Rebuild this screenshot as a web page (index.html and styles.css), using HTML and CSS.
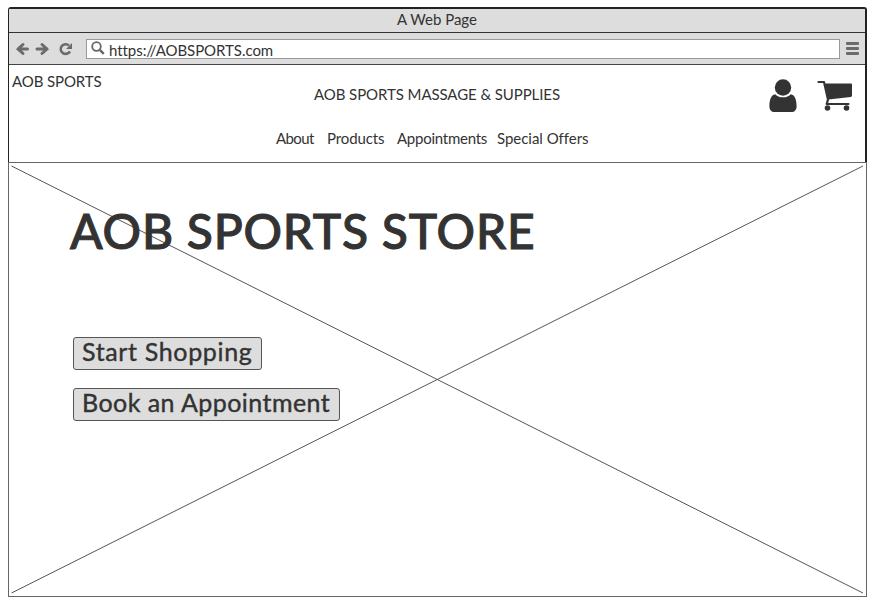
FILE: index.html
```html
<!DOCTYPE html>
<html lang="en">
<head>
<meta charset="utf-8">
<title>A Web Page</title>
<link rel="stylesheet" href="styles.css">
</head>
<body>
<div class="window">
  <div class="chrome">
    <div class="titlebar"><span class="t-title">A Web Page</span></div>
    <div class="toolbar">
      <svg class="nav-icons" width="60" height="16" viewBox="0 0 60 16" fill="none" stroke="#6b6b6b" stroke-width="3" stroke-linecap="round">
        <path d="M12.500 8H3M8 3.500L3 8l5 4.500"/>
        <path d="M22 8h10M27 3.500L32 8l-5 4.500"/>
        <path d="M55 10.500A5 4.800 0 1 1 54 4.500" stroke-width="2.600" stroke-linecap="butt"/>
        <path d="M57 2v6h-6z" fill="#6b6b6b" stroke="none"/>
      </svg>
      <div class="address">
        <svg width="14" height="14" viewBox="0 0 14 14" fill="none" stroke="#666"><circle cx="5.500" cy="5.500" r="4.300" stroke-width="1.800"/><path d="M8.800 8.800l4 4" stroke-width="2.400"/></svg>
        <span class="t-url">https://AOBSPORTS.com</span>
      </div>
      <div class="menu"><i></i><i></i><i></i></div>
    </div>
    <header class="header">
      <div class="brand"><span class="t-brand">AOB SPORTS</span></div>
      <div class="center">
        <div class="tagline"><span class="t-tag">AOB SPORTS MASSAGE &amp; SUPPLIES</span></div>
        <nav class="nav">
          <a class="t-about">About</a><a class="t-products">Products</a><a class="t-appts">Appointments</a><a class="t-offers">Special Offers</a>
        </nav>
      </div>
      <div class="actions">
        <svg width="28" height="34" viewBox="0 0 28 34" fill="#333"><circle cx="14" cy="8.500" r="8.200"/><path d="M6.200 15.200C9 19.300 19 19.300 21.800 15.200C26 16 27.600 21 27.600 27.500C27.600 31 25.500 33 22.500 33H5.500C2.500 33 .4 31 .4 27.500C.4 21 2 16 6.200 15.200z"/></svg>
        <svg width="36" height="34" viewBox="0 0 36 34" fill="#333"><path d="M8 5.500H34a1 1 0 0 1 1 1V17.500a1.500 1.500 0 0 1-1.300 1.500L11.500 21.500z"/><path d="M1.500 4H7l4 17.500-1.300 4.500H31.500" fill="none" stroke="#333" stroke-width="2.200" stroke-linecap="round" stroke-linejoin="round"/><circle cx="10.500" cy="30" r="2.800"/><circle cx="29.500" cy="30" r="2.800"/></svg>
      </div>
    </header>
  </div>
  <main class="hero">
    <svg class="cross" width="857" height="433" viewBox="0 0 857 433" stroke="#555" stroke-width="1"><path d="M2.500 3L854 430M2.500 430L854 3"/></svg>
    <div class="content">
      <h1><span class="t-h1">AOB SPORTS STORE</span></h1>
      <button class="shop"><span class="t-shop">Start Shopping</span></button>
      <button class="book"><span class="t-book">Book an Appointment</span></button>
    </div>
  </main>
</div>
</body>
</html>
```
FILE: styles.css
```css
* { box-sizing: border-box; }
body { margin: 0; background: #fff; color: #333; font: 15px/20px Lato, "Open Sans", sans-serif; }
span, a { white-space: nowrap; }
.window { width: 859px; margin: 7px 0 0 8px; }
.chrome { height: 155px; border: 2px solid #222; border-width: 2px 2px 0 1.500px; border-radius: 3px 3px 0 0; }
.titlebar { height: 24px; text-align: center; background: #ddd; border-bottom: 1px solid #333; }
.toolbar { height: 32px; display: flex; align-items: center; padding: 0 6px; background: #ddd; border-bottom: 1px solid #444; }
.nav-icons { margin-right: 11px; }
.address { flex: 1; height: 20px; display: flex; align-items: center; background: #fff; border: 1px solid #999; padding-left: 4px; }
.address svg { margin-right: 4px; margin-top: -2px; }
.t-url { padding-top: 3px; letter-spacing: -.05px; }
.menu { width: 13px; margin-left: 6px; display: grid; gap: 2px; }
.menu i { height: 3px; background: #6b6b6b; border-radius: 1px; }
.header { height: 97px; display: grid; grid-template-columns: 200px 1fr 200px; padding-left: 3px; }
.brand { padding-top: 6px; letter-spacing: -.1px; }
.center { padding-top: 19px; }
.tagline { padding-left: 102px; height: 44px; letter-spacing: -.08px; }
.nav { display: flex; padding-left: 64px; }
.nav a { flex: none; }
.t-about { width: 51px; letter-spacing: -.6px; }
.t-products { width: 70px; letter-spacing: -.1px; }
.t-appts { width: 100px; letter-spacing: -.25px; }
.t-offers { letter-spacing: -.03px; }
.actions { display: flex; justify-content: flex-end; align-items: flex-start; gap: 20px; padding: 14px 12px 0 0; }
.actions svg:last-child { margin-top: -1px; }
.hero { position: relative; height: 435px; border: 1px solid #666; }
.cross { position: absolute; left: 0; top: 0; }
.content { position: relative; padding: 38px 0 0 61px; }
h1 { margin: 0; height: 60px; font-size: 48px; line-height: 60px; font-weight: 500; letter-spacing: .8px; -webkit-text-stroke: 1px #333; stroke-linejoin: round; }
button { display: block; height: 33px; margin: 0 0 0 3px; padding: 0 0 4px 8px; text-align: left; font: 25px/27px Lato, sans-serif; color: #333; background: #ddd; border: 1px solid #555; border-radius: 3px; -webkit-text-stroke: .4px #333; }
.shop { width: 189px; margin-top: 76px; letter-spacing: .65px; }
.book { width: 267px; margin-top: 18px; letter-spacing: .45px; }
```
